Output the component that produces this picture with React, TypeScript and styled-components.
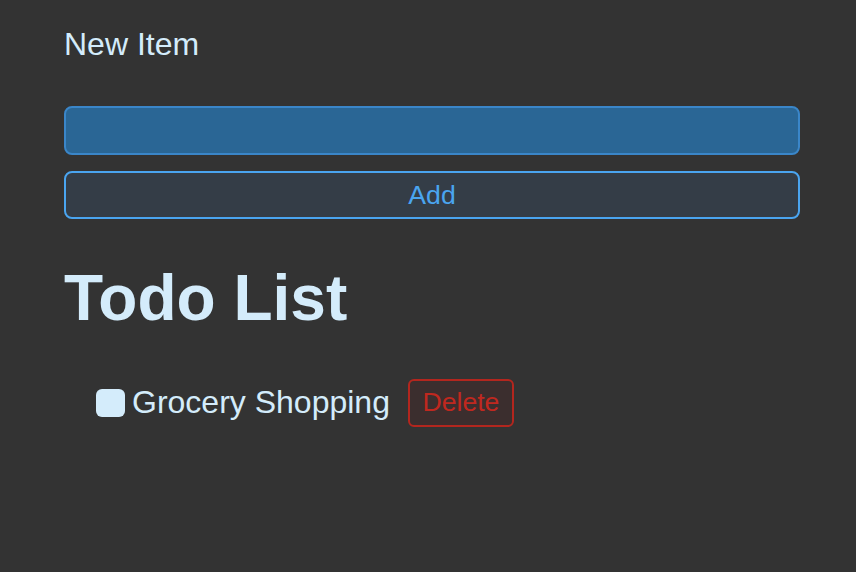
import React from "react";
import styled, { createGlobalStyle } from "styled-components";

const Global = createGlobalStyle`
  html, body { margin: 0; padding: 0; background: #333333; }
  body { font-family: "Liberation Sans", Arial, sans-serif; color: #d4ecfb; }
`;

const Page = styled.div`
  padding: 26px 56px 40px 64px;
  min-height: 572px;
  box-sizing: border-box;
`;

const Form = styled.form`
  display: flex;
  flex-direction: column;
`;

const Label = styled.label`
  font-size: 32px;
  line-height: 37px;
  margin-bottom: 43px;
  color: #d4ecfb;
`;

const TextInput = styled.input`
  box-sizing: border-box;
  height: 49px;
  width: 100%;
  background: #2a6695;
  border: 2px solid #3a86c9;
  border-radius: 8px;
  outline: none;
  color: #d4ecfb;
  font-family: inherit;
  font-size: 26px;
  padding: 0 12px;
`;

const AddButton = styled.button`
  box-sizing: border-box;
  margin-top: 16px;
  height: 48px;
  width: 100%;
  background: #343d47;
  border: 2px solid #4aa5f0;
  border-radius: 8px;
  color: #4aa5f0;
  font-family: inherit;
  font-size: 26.67px;
  cursor: pointer;
`;

const Title = styled.h1`
  margin: 44px 0 44px;
  font-size: 64px;
  line-height: 71.5px;
  font-weight: 700;
  color: #d4ecfb;
`;

const List = styled.ul`
  list-style: none;
  margin: 0;
  padding: 0 0 0 32px;
`;

const Item = styled.li`
  display: flex;
  align-items: center;
  height: 48px;
`;

const Check = styled.input`
  appearance: none;
  margin: 0 7px 0 0;
  width: 29px;
  height: 28px;
  border-radius: 6px;
  background: #d4ecfb;
  border: none;
`;

const ItemText = styled.span`
  font-size: 32px;
  color: #d4ecfb;
  margin-right: 18px;
`;

const DeleteButton = styled.button`
  box-sizing: border-box;
  height: 48px;
  width: 106px;
  background: #3b2e2e;
  border: 2px solid #b3261e;
  border-radius: 6px;
  color: #c0281f;
  font-family: inherit;
  font-size: 26.67px;
  padding: 0;
  cursor: pointer;
`;

export default function App() {
  return (
    <>
      <Global />
      <Page>
        <Form onSubmit={(e) => e.preventDefault()}>
          <Label htmlFor="new-item">New Item</Label>
          <TextInput id="new-item" type="text" />
          <AddButton type="submit">Add</AddButton>
        </Form>
        <Title>Todo List</Title>
        <List>
          <Item>
            <Check type="checkbox" />
            <ItemText>Grocery Shopping</ItemText>
            <DeleteButton>Delete</DeleteButton>
          </Item>
        </List>
      </Page>
    </>
  );
}
